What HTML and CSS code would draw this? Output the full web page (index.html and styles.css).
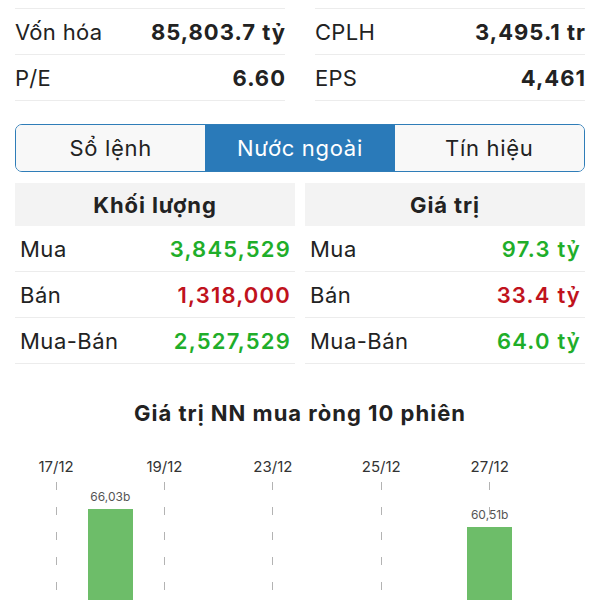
FILE: index.html
```html
<!DOCTYPE html>
<html lang="vi">
<head>
    <meta charset="UTF-8">
    <meta name="viewport" content="width=device-width, initial-scale=1.0">
    <title>Nước ngoài</title>
    <link rel="stylesheet" href="styles.css">
</head>
<body>
    <div class="stats">
        <div class="stat"><span>Vốn hóa</span><b>85,803.7 tỷ</b></div>
        <div class="stat"><span>CPLH</span><b>3,495.1 tr</b></div>
        <div class="stat"><span>P/E</span><b>6.60</b></div>
        <div class="stat"><span>EPS</span><b>4,461</b></div>
    </div>

    <div class="tabs">
        <div class="tab">Sổ lệnh</div>
        <div class="tab active">Nước ngoài</div>
        <div class="tab">Tín hiệu</div>
    </div>

    <div class="foreign">
        <div class="group">
            <div class="head">Khối lượng</div>
            <div class="row"><span>Mua</span><b class="up">3,845,529</b></div>
            <div class="row"><span>Bán</span><b class="down">1,318,000</b></div>
            <div class="row"><span>Mua-Bán</span><b class="up">2,527,529</b></div>
        </div>
        <div class="group">
            <div class="head">Giá trị</div>
            <div class="row"><span>Mua</span><b class="up">97.3 tỷ</b></div>
            <div class="row"><span>Bán</span><b class="down">33.4 tỷ</b></div>
            <div class="row"><span>Mua-Bán</span><b class="up">64.0 tỷ</b></div>
        </div>
    </div>

    <h2 class="chart-title">Giá trị NN mua ròng 10 phiên</h2>

    <div class="chart">
        <div class="col tick"><div class="date">17/12</div><div class="plot"></div></div>
        <div class="col"><div class="date"></div><div class="plot"><span class="val">66,03b</span><div class="bar" style="height: 223px"></div></div></div>
        <div class="col tick"><div class="date">19/12</div><div class="plot"></div></div>
        <div class="col"><div class="date"></div><div class="plot"></div></div>
        <div class="col tick"><div class="date">23/12</div><div class="plot"></div></div>
        <div class="col"><div class="date"></div><div class="plot"></div></div>
        <div class="col tick"><div class="date">25/12</div><div class="plot"></div></div>
        <div class="col"><div class="date"></div><div class="plot"></div></div>
        <div class="col tick"><div class="date">27/12</div><div class="plot"><span class="val">60,51b</span><div class="bar" style="height: 205px"></div></div></div>
        <div class="col"><div class="date"></div><div class="plot"></div></div>
    </div>
</body>
</html>
```

FILE: styles.css
```css
html, body { overflow: hidden; }
body { margin: 0; font-family: Inter, "Liberation Sans", sans-serif; color: #222; background: #fff; }

/* top figures */
.stats { display: grid; grid-template-columns: 270px 270px; column-gap: 30px; margin: 8px 15px 0; }
.stat { display: flex; justify-content: space-between; align-items: center; height: 45px; border-bottom: 1px solid #ececec; font-size: 22px; letter-spacing: 0.3px; }
.stat:nth-child(-n+2) { border-top: 1px solid #ececec; }
.stat b { font-weight: 700; letter-spacing: 1px; margin-right: -1px; }

/* segmented control */
.tabs { display: grid; grid-template-columns: repeat(3, 1fr); margin: 23px 15px 0; height: 48px; border: 1.5px solid #2f7db8; border-radius: 7px; overflow: hidden; box-sizing: border-box; }
.tab { display: flex; align-items: center; justify-content: center; background: #f8f8f8; font-size: 22px; color: #222; letter-spacing: 0.7px; }
.tab.active { background: #2a7ab9; color: #fff; }

/* foreign trade tables */
.foreign { display: grid; grid-template-columns: 280px 280px; column-gap: 10px; margin: 11px 15px 0; }
.head { height: 43px; display: flex; align-items: center; justify-content: center; background: #f3f3f3; font-size: 22px; font-weight: 700; letter-spacing: 0.9px; }
.row { display: flex; justify-content: space-between; align-items: center; height: 45px; padding: 0 5px; border-bottom: 1px solid #ececec; font-size: 22px; letter-spacing: 0.5px; }
.row b { font-weight: 600; letter-spacing: 1.2px; margin-right: -1px; }
.up { color: #1fae2a; }
.down { color: #c0121c; }

/* chart */
.chart-title { margin: 34px 0 0; text-align: center; font-size: 22px; line-height: 30px; font-weight: 700; letter-spacing: 1px; }
.chart { display: grid; grid-template-columns: repeat(10, 1fr); margin: 29px 29px 0; }
.col { display: flex; flex-direction: column; align-items: center; }
.date { height: 20px; line-height: 20px; font-size: 15px; color: #333; white-space: nowrap; }
.plot { width: 100%; height: 250px; margin-top: 5px; display: flex; flex-direction: column; align-items: center; justify-content: flex-end; }
.tick .plot { background-image: repeating-linear-gradient(to bottom, #b3b3b3 0 8px, transparent 8px 25px); background-size: 1px 100%; background-position: center top; background-repeat: no-repeat; }
.val { font-size: 12px; line-height: 14px; color: #555; margin-bottom: 5px; }
.bar { width: 45px; background: #6dbd69; }
```
